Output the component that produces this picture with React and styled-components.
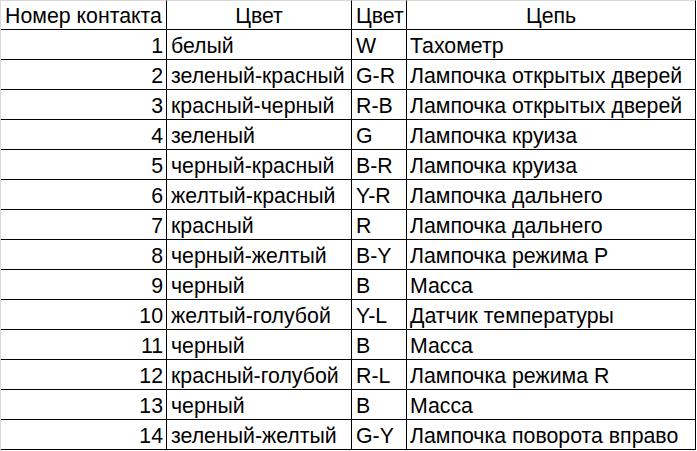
import React from "react";
import styled, { createGlobalStyle } from "styled-components";

const Global = createGlobalStyle`
  html, body { margin: 0; padding: 0; background: #ffffff; }
  body { font-family: "Carlito", "Liberation Sans", Arial, sans-serif; }
`;

const Sheet = styled.div`
  width: 697px;
  height: 451px;
  box-sizing: border-box;
  border-left: 1px solid #d8d8d8;
  background: #ffffff;
  overflow: hidden;
`;

const Table = styled.div`
  display: grid;
  grid-template-columns: 166px 185px 55px 289px;
  font-family: "Liberation Sans", Arial, sans-serif;
  font-size: 21.3px;
  color: #000000;
`;

const Cell = styled.div`
  box-sizing: border-box;
  height: 30px;
  padding: ${(p) => (p.$head ? "3px" : "4px")} ${(p) => p.$pr || 0}px 0 ${(p) => p.$pl || 0}px;
  line-height: 25px;
  text-align: ${(p) => p.$align || "left"};
  white-space: nowrap;
  overflow: hidden;
  border-right: 1px solid #000000;
  border-bottom: 1px solid #000000;
  border-top: ${(p) => (p.$head ? "1px solid #d8d8d8" : "0")};
`;

const rows = [
  [1, "белый", "W", "Тахометр"],
  [2, "зеленый-красный", "G-R", "Лампочка открытых дверей"],
  [3, "красный-черный", "R-B", "Лампочка открытых дверей"],
  [4, "зеленый", "G", "Лампочка круиза"],
  [5, "черный-красный", "B-R", "Лампочка круиза"],
  [6, "желтый-красный", "Y-R", "Лампочка дальнего"],
  [7, "красный", "R", "Лампочка дальнего"],
  [8, "черный-желтый", "B-Y", "Лампочка режима P"],
  [9, "черный", "B", "Масса"],
  [10, "желтый-голубой", "Y-L", "Датчик температуры"],
  [11, "черный", "B", "Масса"],
  [12, "красный-голубой", "R-L", "Лампочка режима R"],
  [13, "черный", "B", "Масса"],
  [14, "зеленый-желтый", "G-Y", "Лампочка поворота вправо"],
];

export default function App() {
  return (
    <>
      <Global />
      <Sheet>
        <Table>
          <Cell $head $align="center">Номер контакта</Cell>
          <Cell $head $align="center">Цвет</Cell>
          <Cell $head $pl={4}>Цвет</Cell>
          <Cell $head $align="center">Цепь</Cell>
          {rows.map(([n, color, code, circuit]) => (
            <React.Fragment key={n}>
              <Cell $align="right" $pr={3}>{n}</Cell>
              <Cell $pl={4}>{color}</Cell>
              <Cell $pl={4}>{code}</Cell>
              <Cell $pl={3}>{circuit}</Cell>
            </React.Fragment>
          ))}
        </Table>
      </Sheet>
    </>
  );
}
